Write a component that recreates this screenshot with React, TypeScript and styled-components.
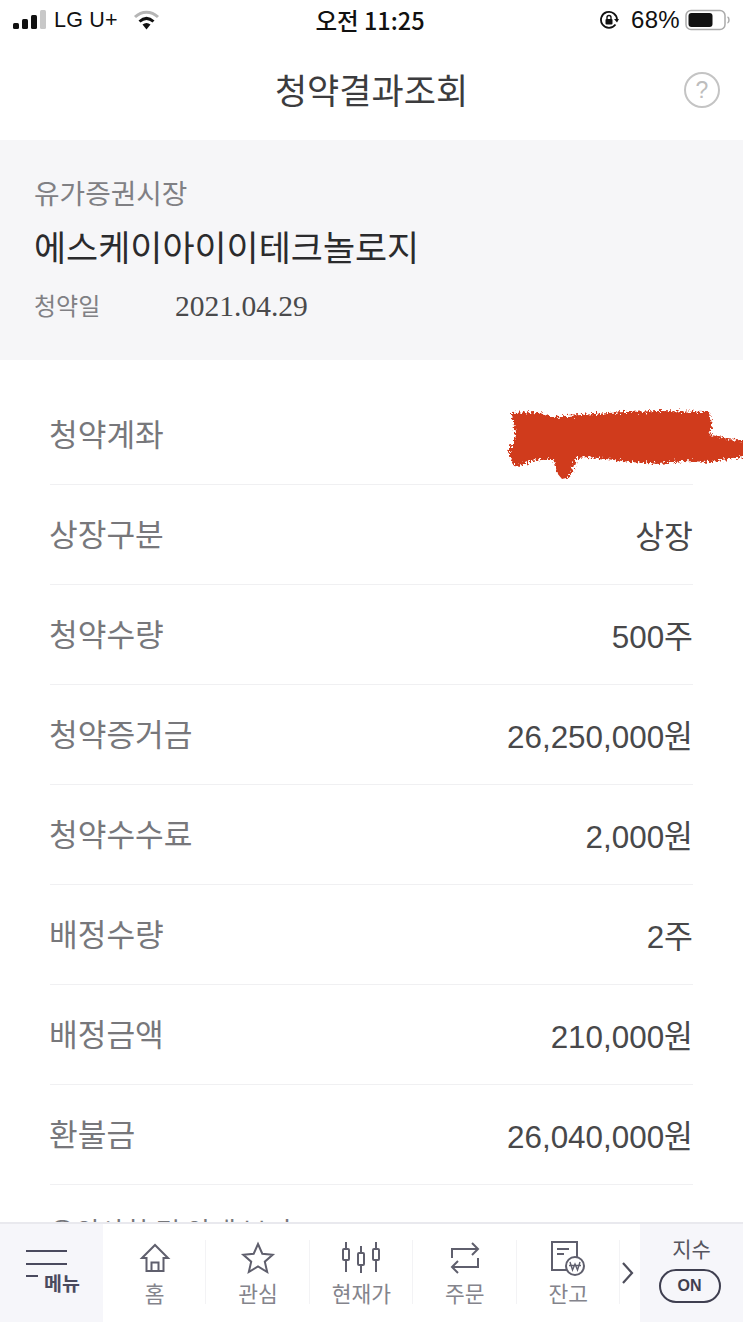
import styled, { createGlobalStyle } from 'styled-components'

const KR = `'Noto Sans CJK KR', 'Noto Sans', sans-serif`
const LATIN = `'Liberation Sans', 'Noto Sans CJK KR', sans-serif`

const GlobalStyle = createGlobalStyle`
  html, body {
    margin: 0;
    padding: 0;
    background: #fff;
  }
`

const Page = styled.div`
  display: flex;
  flex-direction: column;
  width: 743px;
  height: 1322px;
  overflow: hidden;
  background: #fff;
  font-family: ${KR};
`

const StatusBar = styled.div`
  display: grid;
  grid-template-columns: 1fr auto 1fr;
  align-items: center;
  height: 40px;
  padding: 0 12px 0 13px;
  color: #111;
  font-family: ${LATIN};
  font-size: 22px;
`

const StatusGroup = styled.div<{ $end?: boolean }>`
  display: flex;
  align-items: center;
  justify-content: ${(props) => (props.$end ? 'flex-end' : 'flex-start')};
`

const Carrier = styled.span`
  margin: 0 15px 0 7px;
  font-size: 21.5px;
  letter-spacing: 0.2px;
`

const Clock = styled.span`
  margin-right: 4px;
  font-family: ${KR};
  font-size: 23.5px;
  font-weight: 500;
`

const Percent = styled.span`
  margin: 0 5px 0 12px;
  font-size: 24px;
  letter-spacing: 0.3px;
`

const Header = styled.div`
  position: relative;
  display: flex;
  align-items: center;
  justify-content: center;
  height: 100px;
`

const Title = styled.h1`
  margin: 0 0 4px;
  color: #3c3c3e;
  font-size: 35px;
  font-weight: 400;
  line-height: 1;
`

const HelpButton = styled.div`
  position: absolute;
  top: 32px;
  right: 23px;
  display: flex;
  align-items: center;
  justify-content: center;
  width: 32px;
  height: 32px;
  border: 2px solid #c4c4c4;
  border-radius: 50%;
  color: #bdbdbd;
  font-family: ${LATIN};
  font-size: 23px;
`

const Summary = styled.section`
  display: flex;
  flex-direction: column;
  height: 220px;
  box-sizing: border-box;
  padding: 33px 34px 0;
  background: #f6f6f8;
`

const Market = styled.div`
  color: #808084;
  font-size: 27.8px;
  line-height: 38px;
`

const Company = styled.div`
  margin-top: 13px;
  color: #2b2b2d;
  font-size: 34.9px;
  line-height: 44px;
`

const DateRow = styled.div`
  display: flex;
  align-items: center;
  margin-top: 18px;
  height: 36px;
`

const DateLabel = styled.span`
  width: 141px;
  color: #808084;
  font-size: 24px;
`

const DateValue = styled.span`
  margin-top: 5px;
  color: #4a4a4c;
  font-family: 'Liberation Serif', serif;
  font-size: 29.5px;
`

const Rows = styled.div`
  flex: 1;
  min-height: 0;
  overflow: hidden;
  padding: 25px 50px 0;
`

const Row = styled.div`
  position: relative;
  display: flex;
  align-items: center;
  justify-content: space-between;
  height: 99px;
  border-bottom: 1px solid #f0f0f2;
`

const RowLabel = styled.span`
  margin: 0 0 4px -1px;
  color: #77777b;
  font-size: 31.2px;
`

const RowValue = styled.span`
  color: #48484a;
  font-family: ${LATIN};
  font-size: 31.4px;
`

const Scribble = styled.svg`
  position: absolute;
  top: 22px;
  right: -50px;
  width: 240px;
  height: 72px;
`

const Notice = styled.div`
  margin-top: 26px;
  color: #77777b;
  font-size: 27px;
  line-height: 40px;
`

const BottomNav = styled.nav`
  display: grid;
  grid-template-columns: 103px 1fr 103px;
  flex: none;
  height: 100px;
  box-sizing: border-box;
  border-top: 2px solid #e9e9ee;
  background: #fff;
`

const MenuCell = styled.div`
  position: relative;
  background: #f6f6fa;
`

const MenuLines = styled.svg`
  position: absolute;
  top: 24px;
  left: 26px;
  width: 42px;
  height: 32px;
`

const MenuText = styled.span`
  position: absolute;
  top: 47px;
  left: 44px;
  color: #4a4a5e;
  font-size: 19.5px;
  font-weight: 700;
  line-height: 24px;
`

const Tabs = styled.div`
  display: flex;
  align-items: stretch;
`

const Tab = styled.div`
  display: flex;
  flex-direction: column;
  align-items: center;
  width: 103.4px;
  flex: none;
  box-sizing: border-box;
  padding-top: 16px;
  position: relative;

  &::after {
    content: '';
    position: absolute;
    top: 16px;
    right: 0;
    width: 1px;
    height: 64px;
    background: #f3f3f5;
  }
`

const TabIcon = styled.svg`
  width: 38px;
  height: 36px;
  flex: none;
  color: #5f5f6d;
`

const TabLabel = styled.span`
  margin-top: 2px;
  color: #84848c;
  font-size: 21.5px;
  line-height: 30px;
`

const Chevron = styled.svg`
  align-self: center;
  width: 13px;
  height: 24px;
  margin: 0 0 0 1px;
  color: #4f4f5c;
`

const IndexCell = styled.div`
  display: flex;
  flex-direction: column;
  align-items: center;
  padding-top: 9px;
  background: #f6f6fa;
`

const IndexLabel = styled.span`
  color: #55555f;
  font-size: 21px;
  line-height: 30px;
`

const OnPill = styled.div`
  display: flex;
  align-items: center;
  justify-content: center;
  width: 62px;
  height: 34px;
  box-sizing: border-box;
  margin: 6px 4px 0 0;
  border: 2px solid #3f3f50;
  border-radius: 17px;
  color: #3f3f50;
  font-family: ${LATIN};
  font-size: 16px;
  font-weight: 700;
`

const rows = [
  { label: '상장구분', value: '상장' },
  { label: '청약수량', value: '500주' },
  { label: '청약증거금', value: '26,250,000원' },
  { label: '청약수수료', value: '2,000원' },
  { label: '배정수량', value: '2주' },
  { label: '배정금액', value: '210,000원' },
  { label: '환불금', value: '26,040,000원' },
]

const tabs = [
  {
    label: '홈',
    icon: (
      <>
        <path d="M6 18 19 5l13 13h-4.500v13H10.500V18Z" />
        <path d="M15.500 31v-8.500h7V31" />
      </>
    ),
  },
  {
    label: '관심',
    icon: <path d="m19 4 4.300 9.700 10.400 1-7.900 7 2.400 10.300-9.200-5.500L9.800 32l2.400-10.300-7.900-7 10.400-1Z" />,
  },
  {
    label: '현재가',
    icon: (
      <>
        <path d="M4 2v7M4 20v12M19 6v7M19 25v8M34 2v7M34 20v12" />
        <rect x="1" y="9" width="6" height="11" rx="1" />
        <rect x="16" y="13" width="6" height="12" rx="1" />
        <rect x="31" y="9" width="6" height="11" rx="1" />
      </>
    ),
  },
  {
    label: '주문',
    icon: (
      <>
        <path d="M6 18V9h26M26 3l6 6-6 6" />
        <path d="M32 18v9H6M12 21l-6 6 6 6" />
      </>
    ),
  },
  {
    label: '잔고',
    icon: (
      <>
        <path d="M18 30H3V2h25v15" />
        <path d="M8 9h12M8 14h7" />
        <circle cx="26" cy="26" r="9" />
        <path d="m21 22 2.500 8 2.500-6 2.500 6 2.500-8M20 25.500h12" strokeWidth="1.400" />
      </>
    ),
  },
]

const StatusIcons = () => (
  <svg width="34" height="20" viewBox="0 0 34 20">
    <rect x="0" y="13" width="6" height="6" rx="1.500" fill="#111" />
    <rect x="9" y="9" width="6" height="10" rx="1.500" fill="#111" />
    <rect x="18" y="5" width="6" height="14" rx="1.500" fill="#111" />
    <rect x="27" y="0" width="6" height="19" rx="1.500" fill="#c8c8c8" />
  </svg>
)

const Wifi = () => (
  <svg width="27" height="20" viewBox="0 0 27 20" fill="none" strokeWidth="3">
    <path d="M2 7c7-6.500 16-6.500 23 0" stroke="#b5b5b5" />
    <path d="M6.500 11.500c4.500-4 9.500-4 14 0" stroke="#111" />
    <path d="m9.500 14.500 4 5 4-5c-2.500-2-5.500-2-8 0Z" fill="#111" stroke="none" />
  </svg>
)

const RotateLock = () => (
  <svg width="20" height="20" viewBox="0 0 20 20" fill="none">
    <path d="M16.500 14.500A8 8 0 1 1 18 10" stroke="#111" strokeWidth="1.800" />
    <path d="m15 9 3 3.500L20 9Z" fill="#111" />
    <rect x="6.500" y="9" width="7" height="5.500" rx="1" fill="#111" />
    <path d="M8 9V7.500a2 2 0 0 1 4 0V9" stroke="#111" strokeWidth="1.400" />
  </svg>
)

const Battery = () => (
  <svg width="46" height="22" viewBox="0 0 46 22" fill="none">
    <rect x="1" y="1.500" width="39" height="19" rx="5" stroke="#aaa" strokeWidth="1.500" />
    <rect x="3.500" y="4" width="24" height="14" rx="3" fill="#111" />
    <path d="M42.500 8c2 .6 2 5.400 0 6" stroke="#aaa" strokeWidth="1.500" />
  </svg>
)

const App = () => (
  <Page>
    <GlobalStyle />
    <StatusBar>
      <StatusGroup>
        <StatusIcons />
        <Carrier>LG U+</Carrier>
        <Wifi />
      </StatusGroup>
      <Clock>오전 11:25</Clock>
      <StatusGroup $end>
        <RotateLock />
        <Percent>68%</Percent>
        <Battery />
      </StatusGroup>
    </StatusBar>

    <Header>
      <Title>청약결과조회</Title>
      <HelpButton>?</HelpButton>
    </Header>

    <Summary>
      <Market>유가증권시장</Market>
      <Company>에스케이아이이테크놀로지</Company>
      <DateRow>
        <DateLabel>청약일</DateLabel>
        <DateValue>2021.04.29</DateValue>
      </DateRow>
    </Summary>

    <Rows>
      <Row>
        <RowLabel>청약계좌</RowLabel>
        <Scribble viewBox="0 0 240 72">
          <defs>
            <filter id="rough" x="-5%" y="-15%" width="110%" height="130%">
              <feTurbulence type="fractalNoise" baseFrequency="0.45" numOctaves="3" seed="4" />
              <feDisplacementMap in="SourceGraphic" scale="9" />
              <feGaussianBlur stdDeviation="0.6" />
            </filter>
          </defs>
          <path
            filter="url(#rough)"
            fill="#d03a1e"
            d="M9 6l24-1 18 5 40-3 30-2 36-1 50 1 2 14-4 8 20 5 18 2v16l-14 1-20 4-30-1-22 3-30-2-24-3-18-2-12 1-1 4-5 15-8 2-5-6-3-14-24 2-10 5-7-1-5-13 6-10 1-11-2-10Z"
          />
        </Scribble>
      </Row>
      {rows.map((row) => (
        <Row key={row.label}>
          <RowLabel>{row.label}</RowLabel>
          <RowValue>{row.value}</RowValue>
        </Row>
      ))}
      <Notice>유의사항 및 안내 보기</Notice>
    </Rows>

    <BottomNav>
      <MenuCell>
        <MenuLines viewBox="0 0 42 32" fill="none" stroke="#4a4a5e" strokeWidth="2">
          <path d="M0 3h41M0 16h41M0 28h12" />
        </MenuLines>
        <MenuText>메뉴</MenuText>
      </MenuCell>
      <Tabs>
        {tabs.map((tab) => (
          <Tab key={tab.label}>
            <TabIcon viewBox="0 0 38 36" fill="none" stroke="currentColor" strokeWidth="2">
              {tab.icon}
            </TabIcon>
            <TabLabel>{tab.label}</TabLabel>
          </Tab>
        ))}
        <Chevron viewBox="0 0 13 24" fill="none" stroke="currentColor" strokeWidth="2.200">
          <path d="m2 2 9 10-9 10" />
        </Chevron>
      </Tabs>
      <IndexCell>
        <IndexLabel>지수</IndexLabel>
        <OnPill>ON</OnPill>
      </IndexCell>
    </BottomNav>
  </Page>
)

export default App
